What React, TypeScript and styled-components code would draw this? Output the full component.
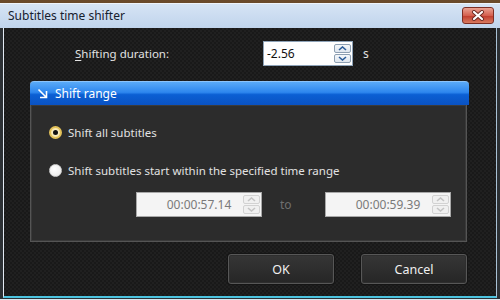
import React from 'react';
import styled, { createGlobalStyle } from 'styled-components';

const GlobalStyle = createGlobalStyle`
  html, body {
    margin: 0;
    padding: 0;
    background: #3a2919;
  }
  body {
    font-family: 'Noto Sans', 'DejaVu Sans', sans-serif;
  }
`;

const Desktop = styled.div`
  width: 500px;
  height: 300px;
  box-sizing: border-box;
  padding-top: 3px;
  background: linear-gradient(#6a4a2b, #2e2117);
`;

const Frame = styled.div`
  height: 297px;
  display: flex;
  flex-direction: column;
  padding: 0 3px 1px 3px;
  box-sizing: border-box;
  background: #2c3034;
  border-bottom: 1px solid #d8e6ee;
`;

const TitleBar = styled.div`
  height: 25px;
  margin: 0 -3px;
  display: flex;
  align-items: center;
  justify-content: space-between;
  padding: 0 6px 0 8px;
  background: linear-gradient(#d6e4f5, #c0d4ec);
  border-top: 1px solid #eef4fb;
  box-sizing: border-box;
`;

const Title = styled.span`
  font-size: 12px;
  color: #16202e;
  margin-top: -2px;
`;

const CloseButton = styled.div`
  width: 32px;
  height: 17px;
  box-sizing: border-box;
  border: 1px solid #7d2e24;
  border-radius: 3px;
  background: linear-gradient(#eaa293, #d4604f 50%, #c0392b 51%, #d77a5f);
  display: flex;
  align-items: center;
  justify-content: center;
  margin-top: -1px;
`;

const Content = styled.div`
  flex: 1;
  display: flex;
  flex-direction: column;
  border-left: 1px solid #e2eaf3;
  border-right: 1px solid #a9c2d6;
  border-bottom: 2px solid #4cc4e0;
  background-color: #1c1c1c;
  background-image: repeating-conic-gradient(#202020 0 25%, #191919 0 50%);
  background-size: 4px 4px;
  padding: 13px 27px 0 26px;
`;

const DurationRow = styled.div`
  display: flex;
  align-items: center;
  height: 25px;
  padding-left: 45px;
`;

const Label = styled.label`
  width: 188px;
  font-size: 11.5px;
  color: #e2e2e2;

  u {
    text-decoration-thickness: 1px;
    text-underline-offset: 2px;
  }
`;

const SpinField = styled.div<{ $disabled?: boolean }>`
  position: relative;
  height: 25px;
  box-sizing: border-box;
  border: 1px solid ${({ $disabled }) => ($disabled ? '#a8a8a8' : '#8ea3b8')};
  background: ${({ $disabled }) => ($disabled ? '#f4f4f4' : '#ffffff')};
  font-size: 12px;
  display: flex;
  align-items: center;
`;

const DurationField = styled(SpinField)`
  width: 90px;
  padding-left: 3px;
  color: #111;
`;

const TimeField = styled(SpinField)`
  width: 126px;
  justify-content: center;
  color: #7a7a7a;
`;

const Spinner = styled.div`
  position: absolute;
  right: 1px;
  top: 2px;
  width: 17px;
  display: flex;
  flex-direction: column;
  gap: 1px;
`;

const SpinButton = styled.div<{ $disabled?: boolean }>`
  height: 9px;
  box-sizing: border-box;
  border: 1px solid ${({ $disabled }) => ($disabled ? '#d2d2d2' : '#8d9fb2')};
  border-radius: 2px;
  background: ${({ $disabled }) => ($disabled ? '#f0f0f0' : 'linear-gradient(#f4f7fa, #dfe6ee)')};
  display: flex;
  align-items: center;
  justify-content: center;
`;

const Unit = styled.span`
  margin-left: 10px;
  font-size: 12px;
  color: #e2e2e2;
`;

const Group = styled.section`
  margin-top: 15px;
  display: flex;
  flex-direction: column;
`;

const GroupHeader = styled.div`
  height: 24px;
  display: flex;
  align-items: center;
  gap: 7px;
  padding-left: 7px;
  border-radius: 4px 4px 0 0;
  background: linear-gradient(#5aaaf8, #2d86ee 45%, #0b5fd4 55%, #0a52c2);
  border-top: 1px solid #8cc4fb;
  box-sizing: border-box;
  color: #ffffff;
  font-size: 12px;
`;

const GroupBody = styled.div`
  height: 137px;
  box-sizing: border-box;
  margin-right: 2px;
  border: 1px solid #555555;
  border-top: none;
  box-shadow: inset 0 0 0 1px #3a3a3a;
  background: #2c2c2c;
  display: flex;
  flex-direction: column;
  padding: 19px 0 0 18px;
`;

const RadioRow = styled.div`
  display: flex;
  align-items: center;
  gap: 6px;
  height: 16px;
  font-size: 11.5px;
  color: #e2e2e2;

  & + & {
    margin-top: 22px;
  }
`;

const Radio = styled.span<{ $checked?: boolean }>`
  width: 13px;
  height: 13px;
  border-radius: 50%;
  box-sizing: border-box;
  display: flex;
  align-items: center;
  justify-content: center;
  border: ${({ $checked }) => ($checked ? '2px solid #e3c25a' : '1px solid #cfcfcf')};
  background: ${({ $checked }) =>
    $checked ? 'radial-gradient(#fffbe8, #f3dc8e)' : 'radial-gradient(circle at 40% 35%, #ffffff, #e6e6e6)'};

  &::after {
    content: '';
    display: ${({ $checked }) => ($checked ? 'block' : 'none')};
    width: 5px;
    height: 5px;
    border-radius: 50%;
    background: #111;
  }
`;

const TimeRow = styled.div`
  display: flex;
  align-items: center;
  margin-top: 14px;
  padding-left: 87px;
`;

const ToLabel = styled.span`
  width: 63px;
  box-sizing: border-box;
  padding-left: 18px;
  font-size: 12px;
  color: #6f6f6f;
`;

const ButtonRow = styled.div`
  display: flex;
  justify-content: flex-end;
  gap: 27px;
  margin-top: 12px;
  padding-right: 2px;
`;

const DialogButton = styled.button`
  width: 106px;
  height: 30px;
  border: 1px solid #575757;
  border-radius: 3px;
  background: linear-gradient(#363636, #262626);
  box-shadow: inset 0 0 0 1px #2e2e2e, 0 0 0 1px #151515;
  color: #f0f0f0;
  font-family: 'Noto Sans', 'DejaVu Sans', sans-serif;
  font-size: 12.5px;
`;

const Chevron = ({ up, color }: { up?: boolean; color: string }) => (
  <svg width="9" height="5" viewBox="0 0 9 5">
    <path
      d={up ? 'M1 4 L4.5 1 L8 4' : 'M1 1 L4.5 4 L8 1'}
      fill="none"
      stroke={color}
      strokeWidth="1.6"
    />
  </svg>
);

const Spin = ({ disabled }: { disabled?: boolean }) => {
  const color = disabled ? '#c4c4c4' : '#2c5d99';
  return (
    <Spinner>
      <SpinButton $disabled={disabled}>
        <Chevron up color={color} />
      </SpinButton>
      <SpinButton $disabled={disabled}>
        <Chevron color={color} />
      </SpinButton>
    </Spinner>
  );
};

const App = () => {
  return (
    <Desktop>
      <GlobalStyle />
      <Frame>
        <TitleBar>
          <Title>Subtitles time shifter</Title>
          <CloseButton>
            <svg width="14" height="11" viewBox="0 0 14 11">
              <path d="M3 2 L11 9 M11 2 L3 9" stroke="#6b2a22" strokeWidth="4" strokeLinecap="round" />
              <path d="M3 2 L11 9 M11 2 L3 9" stroke="#ffffff" strokeWidth="2.2" strokeLinecap="round" />
            </svg>
          </CloseButton>
        </TitleBar>
        <Content>
          <DurationRow>
            <Label>
              <u>S</u>hifting duration:
            </Label>
            <DurationField>
              -2.56
              <Spin />
            </DurationField>
            <Unit>s</Unit>
          </DurationRow>

          <Group>
            <GroupHeader>
              <svg width="11" height="11" viewBox="0 0 11 11">
                <path d="M1.5 1.5 L9 9 M9.5 3 L9.5 9.5 L3 9.5" fill="none" stroke="#ffffff" strokeWidth="1.6" />
              </svg>
              Shift range
            </GroupHeader>
            <GroupBody>
              <RadioRow>
                <Radio $checked />
                Shift all subtitles
              </RadioRow>
              <RadioRow>
                <Radio />
                Shift subtitles start within the specified time range
              </RadioRow>
              <TimeRow>
                <TimeField $disabled>
                  00:00:57.14
                  <Spin disabled />
                </TimeField>
                <ToLabel>to</ToLabel>
                <TimeField $disabled>
                  00:00:59.39
                  <Spin disabled />
                </TimeField>
              </TimeRow>
            </GroupBody>
          </Group>

          <ButtonRow>
            <DialogButton>OK</DialogButton>
            <DialogButton>Cancel</DialogButton>
          </ButtonRow>
        </Content>
      </Frame>
    </Desktop>
  );
};

export default App;
